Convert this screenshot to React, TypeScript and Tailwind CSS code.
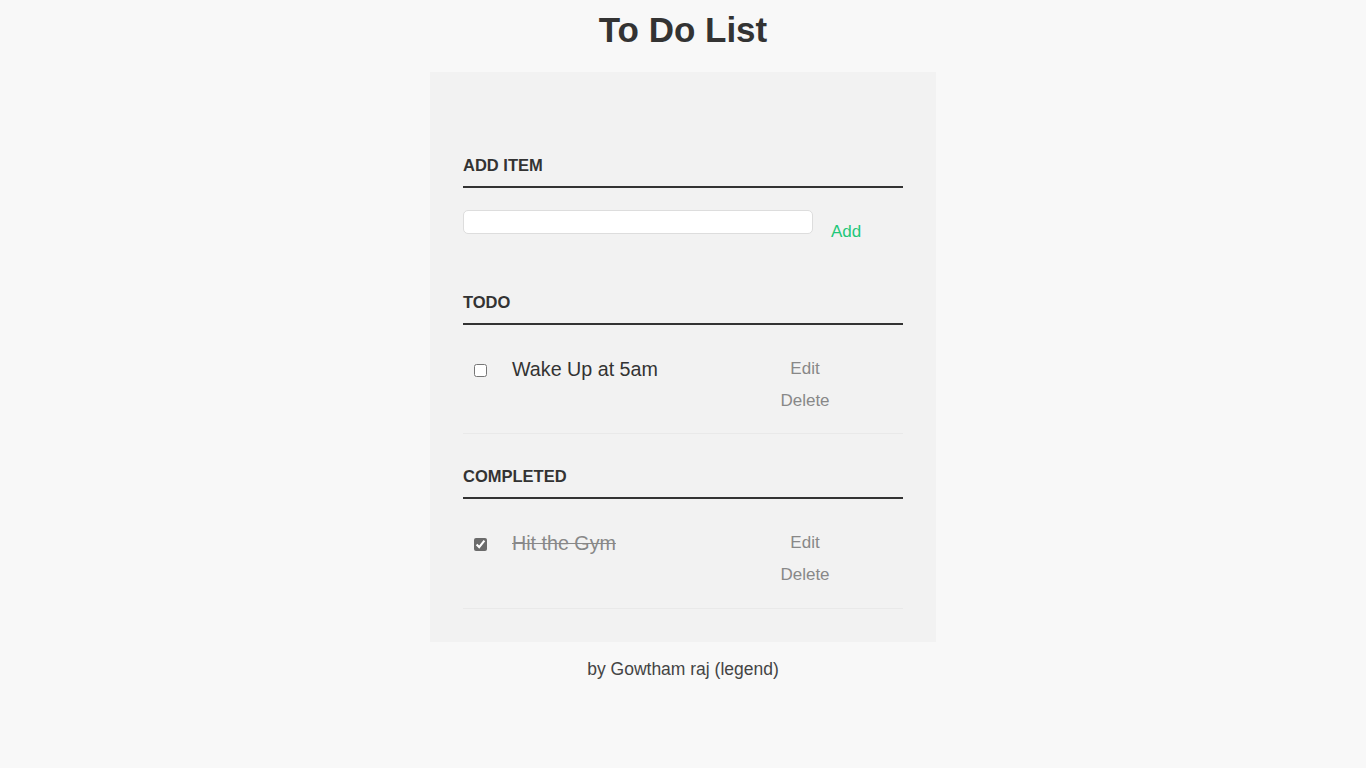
import type React from "react"

type Task = { id: number; text: string; done: boolean }

const todo: Task[] = [{ id: 1, text: "Wake Up at 5am", done: false }]
const completed: Task[] = [{ id: 2, text: "Hit the Gym", done: true }]

const SectionTitle = ({ children, className = "" }: { children: React.ReactNode; className?: string }) => (
    <h3
        className={`text-[16.5px] leading-[20px] font-bold uppercase text-[#333] pb-[11px] border-b-2 border-[#333] ${className}`}
    >
        {children}
    </h3>
)

const TaskRow = ({ task, className = "" }: { task: Task; className?: string }) => (
    <li className={`flex items-start pt-[33px] border-b border-[#e9e9e9] ${className}`}>
        <input
            type="checkbox"
            defaultChecked={task.done}
            className="ml-[11px] mt-[6px] w-[13px] h-[13px] accent-[#6b6b6b]"
        />
        <span
            className={`ml-[25px] flex-1 text-[19.7px] leading-[22px] ${
                task.done ? "line-through text-[#888]" : "text-[#333]"
            }`}
        >
            {task.text}
        </span>
        <div className="w-[100px] mr-[48px] mt-[1px] flex flex-col items-center gap-[12px] text-[17px] leading-[20px] text-[#888]">
            <button>Edit</button>
            <button>Delete</button>
        </div>
    </li>
)

const App: React.FC = () => {
    return (
        <div className="min-h-screen bg-[#f8f8f8] text-[#333] font-['Liberation_Sans',Arial,sans-serif]">
            <h1 className="text-center text-[35px] leading-[41px] font-bold pt-[9px] text-[#333]">To Do List</h1>

            <div className="w-[506px] mx-auto mt-[22px] bg-[#f2f2f2] px-[33px] pt-[83px] pb-[33px]">
                <SectionTitle>Add Item</SectionTitle>
                <div className="flex items-start mt-[22px]">
                    <input
                        type="text"
                        className="w-[350px] h-[24px] bg-white border border-[#ddd] rounded-[5px] px-2 outline-none"
                    />
                    <button className="ml-[18px] mt-[12px] -mb-[1px] text-[17px] leading-[20px] text-[#1fc77a]">
                        Add
                    </button>
                </div>

                <SectionTitle className="mt-[51px]">Todo</SectionTitle>
                <ul>
                    {todo.map((t) => (
                        <TaskRow key={t.id} task={t} className="pb-[22px]" />
                    ))}
                </ul>

                <SectionTitle className="mt-[32px]">Completed</SectionTitle>
                <ul>
                    {completed.map((t) => (
                        <TaskRow key={t.id} task={t} className="pb-[23px]" />
                    ))}
                </ul>
            </div>

            <p className="text-center text-[17.5px] leading-[21px] mt-[17px] text-[#444]">by Gowtham raj (legend)</p>
        </div>
    )
}

export default App
